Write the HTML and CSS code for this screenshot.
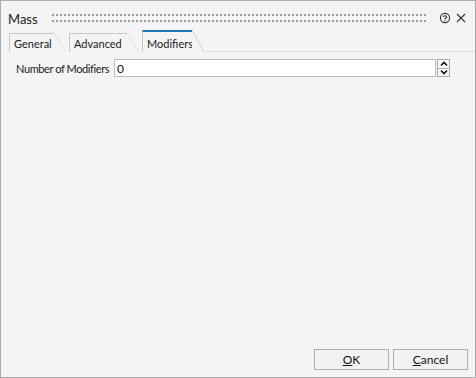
FILE: index.html
```html
<!DOCTYPE html>
<html lang="en">

<head>
  <meta charset="UTF-8">
  <title>Mass</title>
  <link rel="stylesheet" href="styles.css">
</head>

<body>

  <div class="dialog">
    <div class="titlebar">
      <span class="title">Mass</span>
      <div class="grip"></div>
      <svg class="tb-icon" width="12" height="12" viewBox="0 0 12 12">
        <circle cx="6" cy="6" r="4.6" fill="none" stroke="#333" stroke-width="1.1"/>
        <path d="M4.4 4.9 C4.4 3.3 7.6 3.3 7.6 4.9 C7.6 6 6 6 6 7.2" fill="none" stroke="#333" stroke-width="1.1"/>
        <rect x="5.5" y="8" width="1" height="1" fill="#333"/>
      </svg>
      <svg class="tb-icon close" width="12" height="12" viewBox="0 0 12 12">
        <path d="M2 2 L10 10 M10 2 L2 10" stroke="#333" stroke-width="1.1"/>
      </svg>
    </div>

    <div class="tabs">
      <div class="tab tab-general">General</div>
      <div class="tab tab-advanced">Advanced</div>
      <div class="tab tab-modifiers active">Modifiers</div>
      <div class="tab-fill"></div>
    </div>

    <div class="page">
      <div class="field">
        <label for="count">Number of Modifiers</label>
        <input type="text" id="count" value="0">
        <div class="spin">
          <button class="spin-btn">
            <svg width="8" height="6" viewBox="0 0 8 6"><path d="M1 4.5 L4 1.5 L7 4.5" fill="none" stroke="#111" stroke-width="1.6"/></svg>
          </button>
          <button class="spin-btn">
            <svg width="8" height="6" viewBox="0 0 8 6"><path d="M1 1.5 L4 4.5 L7 1.5" fill="none" stroke="#111" stroke-width="1.6"/></svg>
          </button>
        </div>
      </div>
    </div>

    <div class="footer">
      <button class="btn"><u>O</u>K</button>
      <button class="btn"><u>C</u>ancel</button>
    </div>
  </div>

</body>

</html>
```

FILE: styles.css
```css
body {
  margin: 0;
  font-family: Lato, 'Liberation Sans', Arial, sans-serif;
  font-size: 11px;
  color: #1b1b1b;
}

.dialog {
  width: 476px;
  height: 378px;
  box-sizing: border-box;
  border: 1px solid #adadad;
  background-color: #f4f4f4;
  display: flex;
  flex-direction: column;
}

/* title bar */
.titlebar {
  display: flex;
  align-items: center;
  height: 29px;
  padding: 0 8px 0 7px;
}

.title {
  font-size: 13px;
  padding-top: 6px;
  color: #222;
}

.grip {
  flex: 1;
  height: 8px;
  margin: 4px 8px 0 14px;
  background:
    linear-gradient(90deg, #9c9c9c 2px, transparent 2px) 0 0 / 4px 2px repeat-x,
    linear-gradient(90deg, #9c9c9c 2px, transparent 2px) 0 6px / 4px 2px repeat-x;
}

.tb-icon {
  margin-top: 4px;
  margin-left: 4px;
}

/* tabs */
.tabs {
  display: flex;
  align-items: flex-end;
  height: 22px;
  padding-left: 8px;
}

.tab {
  position: relative;
  box-sizing: border-box;
  height: 19px;
  margin-right: 3px;
  padding: 3px 0 0 4px;
  border-top: 1px solid #c9c9c9;
  border-left: 1px solid #c9c9c9;
  line-height: 13px;
  clip-path: polygon(0 0, calc(100% - 12px) 0, 100% 100%, 0 100%);
}

.tab::after {
  content: "";
  position: absolute;
  top: -1px;
  right: 0;
  width: 12px;
  height: 19px;
  background: linear-gradient(to top right, transparent calc(50% - 0.7px), #c9c9c9 50%, transparent calc(50% + 0.7px));
}

.tab-general {
  width: 57px;
}

.tab-advanced {
  width: 70px;
}

.tab-modifiers {
  width: 62px;
}

.tab.active {
  height: 22px;
  padding-top: 5px;
  border-top: 2px solid #1f7ab3;
  clip-path: none;
}

.tab.active::after {
  top: -2px;
  height: 22px;
  background: linear-gradient(to top right, #f4f4f4 calc(50% - 0.7px), #c9c9c9 50%, #f4f4f4 calc(50% + 0.7px));
}

.tab-fill {
  flex: 1;
  height: 1px;
  background-color: #dedede;
  margin-left: -3px;
}

/* page */
.page {
  flex: 1;
  padding: 7px 25px 0 15px;
}

.field {
  display: flex;
  align-items: center;
  height: 18px;
}

.field label {
  flex: none;
  width: 98px;
  white-space: nowrap;
  letter-spacing: -0.4px;
}

.field input[type="text"] {
  flex: 1;
  min-width: 0;
  box-sizing: border-box;
  height: 18px;
  margin: 0;
  padding: 0 2px;
  border: 1px solid #bcbcbc;
  background: #fff;
  font-family: inherit;
  font-size: 12px;
  color: #111;
  outline: none;
}

.spin {
  display: flex;
  flex-direction: column;
  width: 13px;
  height: 18px;
  margin-left: 1px;
}

.spin-btn {
  flex: 1;
  display: flex;
  align-items: center;
  justify-content: center;
  padding: 0;
  margin: 0;
  border: 1px solid #acacac;
  background: #f7f7f7;
}

.spin-btn + .spin-btn {
  border-top: none;
}

/* footer */
.footer {
  display: flex;
  justify-content: flex-end;
  gap: 4px;
  padding: 0 7px 7px 0;
}

.btn {
  width: 75px;
  height: 21px;
  padding: 0;
  border: 1px solid #adadad;
  background-color: #f2f2f2;
  font-family: inherit;
  font-size: 12px;
  color: #111;
}
```
